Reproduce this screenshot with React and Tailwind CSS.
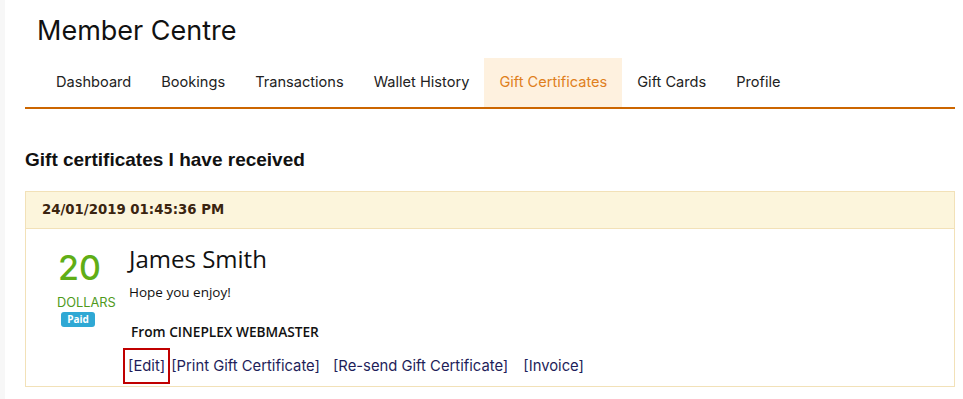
import React from "react";

const tabs = [
  "Dashboard",
  "Bookings",
  "Transactions",
  "Wallet History",
  "Gift Certificates",
  "Gift Cards",
  "Profile",
];

export default function App() {
  const poppins = { fontFamily: "Inter, 'Noto Sans', sans-serif" };
  const open = { fontFamily: "'Open Sans', sans-serif" };
  return (
    <div className="flex min-h-[399px] w-[963px] bg-white">
      <div className="w-[5px] shrink-0 bg-[#f7f7f7]" />
      <div className="w-[930px] ml-[20px] flex flex-col">
        <h1
          className="ml-[12px] mt-[14px] text-[27px] leading-[34px] text-[#111] font-normal"
          style={poppins}
        >
          Member Centre
        </h1>
        <nav className="mt-[10px] flex pl-[16px]">
          {tabs.map((t) => (
            <div
              key={t}
              className={
                "h-[49px] px-[15px] flex items-center text-[14.6px] " +
                (t === "Gift Certificates"
                  ? "bg-[#fef1df] text-[#e07f1c]"
                  : "text-[#222]")
              }
              style={poppins}
            >
              {t}
            </div>
          ))}
        </nav>
        <div className="h-[2px] bg-[#cc6600]" />
        <h2
          className="mt-[40px] text-[19px] leading-[22px] font-bold text-[#111]"
          style={{ fontFamily: "'Liberation Sans', Arial, sans-serif" }}
        >
          Gift certificates I have received
        </h2>
        <div className="mt-[20px] border border-solid border-[color:#f2e1b8] flex flex-col">
          <div
            className="h-[37px] bg-[#fcf5dc] border-b border-solid border-[color:#f2e1b8] flex items-center pl-[16px] text-[13.3px] font-bold text-[#3a2410]"
            style={{ fontFamily: "'DejaVu Sans', Verdana, sans-serif" }}
          >
            24/01/2019 01:45:36 PM
          </div>
          <div className="flex pt-[14px] pb-[2px]">
            <div className="w-[103px] shrink-0 flex flex-col items-start pl-[31px] pt-[5px]">
              <div
                className="text-[34px] leading-[40px] text-[#5fae16] font-medium ml-[1px]"
                style={poppins}
              >
                20
              </div>
              <div
                className="text-[12.8px] leading-[16px] text-[#4f9a1c] mt-[7px]"
                style={poppins}
              >
                DOLLARS
              </div>
              <div
                className="mt-[1px] ml-[4px] w-[34px] h-[15px] rounded-[3px] bg-[#2fa8d4] text-white text-[10px] font-bold flex items-center justify-center"
                style={open}
              >
                Paid
              </div>
            </div>
            <div className="flex flex-col">
              <div className="text-[24px] leading-[32px] text-[#111]" style={open}>
                James Smith
              </div>
              <div className="text-[13.5px] leading-[18px] text-[#111] mt-[8px]" style={open}>
                Hope you enjoy!
              </div>
              <div
                className="text-[13.7px] leading-[18px] font-semibold text-[#111] mt-[22px] ml-[2px]"
                style={open}
              >
                From CINEPLEX WEBMASTER
              </div>
              <div
                className="mt-[7px] flex items-center text-[14.8px] text-[#1e1e5a] ml-[-6px]"
                style={poppins}
              >
                <span className="border-2 border-solid border-[color:#c00000] h-[36px] px-[3px] flex items-center">
                  [Edit]
                </span>
                <span className="ml-[1px]">[Print Gift Certificate]</span>
                <span className="ml-[13px]">[Re-send Gift Certificate]</span>
                <span className="ml-[15px]">[Invoice]</span>
              </div>
            </div>
          </div>
        </div>
      </div>
    </div>
  );
}
